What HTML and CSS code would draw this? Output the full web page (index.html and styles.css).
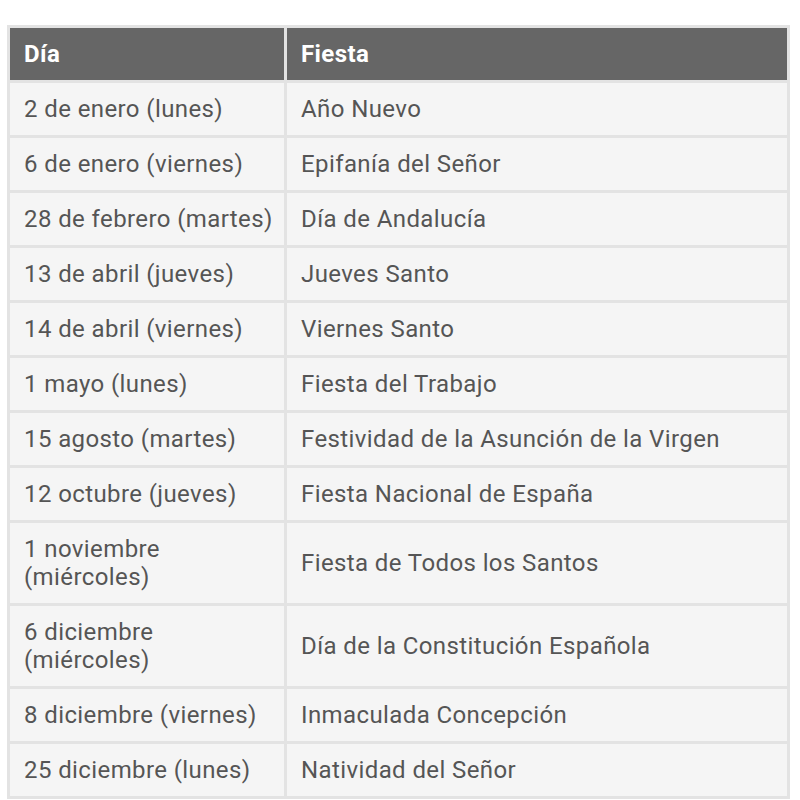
FILE: index.html
```html
<!DOCTYPE html>
<html lang="es">
<head>
<meta charset="utf-8">
<link rel="stylesheet" href="styles.css">
</head>
<body>
<table class="fiestas">
  <thead>
    <tr><th class="c1">Día</th><th>Fiesta</th></tr>
  </thead>
  <tbody>
    <tr><td>2 de enero (lunes)</td><td>Año Nuevo</td></tr>
    <tr><td>6 de enero (viernes)</td><td>Epifanía del Señor</td></tr>
    <tr><td>28 de febrero (martes)</td><td>Día de Andalucía</td></tr>
    <tr><td>13 de abril (jueves)</td><td>Jueves Santo</td></tr>
    <tr><td>14 de abril (viernes)</td><td>Viernes Santo</td></tr>
    <tr><td>1 mayo (lunes)</td><td>Fiesta del Trabajo</td></tr>
    <tr><td>15 agosto (martes)</td><td>Festividad de la Asunción de la Virgen</td></tr>
    <tr><td>12 octubre (jueves)</td><td>Fiesta Nacional de España</td></tr>
    <tr><td>1 noviembre (miércoles)</td><td>Fiesta de Todos los Santos</td></tr>
    <tr><td>6 diciembre (miércoles)</td><td>Día de la Constitución Española</td></tr>
    <tr><td>8 diciembre (viernes)</td><td>Inmaculada Concepción</td></tr>
    <tr><td>25 diciembre (lunes)</td><td>Natividad del Señor</td></tr>
  </tbody>
</table>
</body>
</html>
```
FILE: styles.css
```css
html, body {
  margin: 0;
  padding: 0;
  background: #ffffff;
}
body {
  padding: 25px 0 0 7px;
  font-family: Roboto, "Liberation Sans", sans-serif;
}
.fiestas {
  width: 783px;
  table-layout: fixed;
  border-collapse: separate;
  border-spacing: 3px;
  background: #e3e3e3;
  font-size: 24px;
  line-height: 28px;
  color: #555555;
  letter-spacing: 0.4px;
}
.fiestas th,
.fiestas td {
  text-align: left;
  vertical-align: middle;
  padding: 12px 10px 12px 14px;
}
.fiestas th {
  background: #666666;
  color: #ffffff;
  font-weight: bold;
}
.fiestas td {
  background: #f5f5f5;
}
.fiestas .c1 {
  width: 250px;
}
```
